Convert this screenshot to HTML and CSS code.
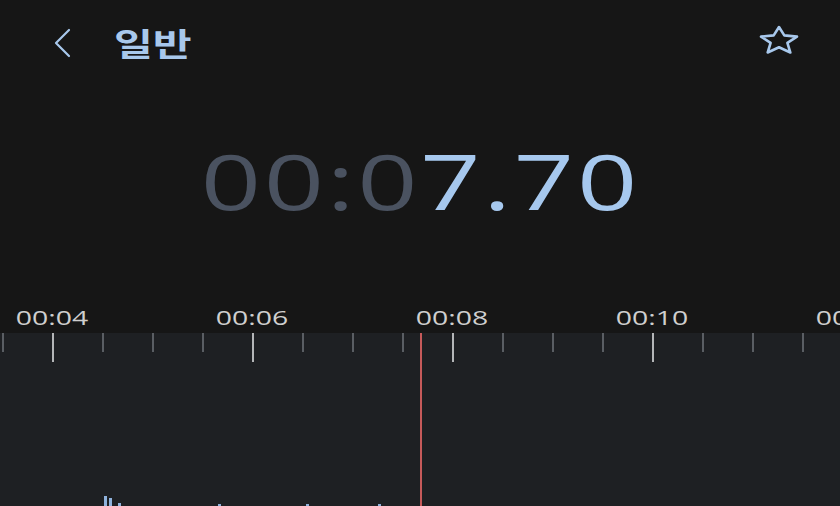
FILE: index.html
```html
<!DOCTYPE html>
<html lang="ko">
<head>
    <meta charset="UTF-8">
    <meta name="viewport" content="width=device-width, initial-scale=1.0">
    <title>녹음</title>
    <link rel="stylesheet" href="styles.css">
</head>
<body>
    <div class="screen">
        <!-- 상단 바 -->
        <header class="top-bar">
            <button class="icon-btn back">
                <svg width="22" height="30" viewBox="0 0 22 30"><path d="M19 2 L6 15 L19 28" fill="none" stroke="#a8c8ec" stroke-width="2.2" stroke-linecap="round" stroke-linejoin="round"/></svg>
            </button>
            <h1 class="title">일반</h1>
            <button class="icon-btn star">
                <svg width="42" height="32" viewBox="0 0 42 32"><path d="M21 2 L26.3 10.4 L39 11.6 L29.4 17.9 L32.3 27.5 L21 22.3 L9.7 27.5 L12.6 17.9 L3 11.6 L15.7 10.4 Z" fill="none" stroke="#a8c8ec" stroke-width="2.6" stroke-linejoin="round"/></svg>
            </button>
        </header>

        <!-- 경과 시간 -->
        <div class="timer"><span class="digits"><span class="dim">00:0</span><span class="lit">7.70</span></span></div>

        <!-- 타임라인 -->
        <div class="ruler-labels">
            <span style="left: 52px">00:04</span>
            <span style="left: 252px">00:06</span>
            <span style="left: 452px">00:08</span>
            <span style="left: 652px">00:10</span>
            <span style="left: 852px">00:12</span>
        </div>
        <div class="track">
            <div class="ticks" id="ticks"></div>
            <div class="playhead"></div>
            <div class="wave">
                <i style="left: 104px; height: 10px"></i>
                <i style="left: 109px; height: 8px"></i>
                <i style="left: 118px; height: 3px"></i>
                <i style="left: 218px; height: 2px"></i>
                <i style="left: 306px; height: 2px"></i>
                <i style="left: 378px; height: 2px"></i>
            </div>
        </div>
    </div>

    <script>
        const ticks = document.getElementById("ticks");
        for (let x = 2; x < 840; x += 50) {
            const t = document.createElement("i");
            t.className = (x - 52) % 200 === 0 ? "major" : "minor";
            t.style.left = x + "px";
            ticks.appendChild(t);
        }
    </script>
</body>
</html>
```

FILE: styles.css
```css
/* Base */
body {
    margin: 0;
    background-color: #161616;
    font-family: 'Noto Sans', 'Noto Sans CJK KR', sans-serif;
    overflow: hidden;
}

.screen {
    width: 840px;
    height: 506px;
    display: flex;
    flex-direction: column;
    overflow: hidden;
}

/* Top bar */
.top-bar {
    height: 84px;
    display: flex;
    align-items: center;
    padding: 0 40px 0 50px;
}

.icon-btn {
    background: none;
    border: none;
    padding: 0;
    display: flex;
    cursor: pointer;
}
.back { margin-top: 1px; }
.star { margin-top: -2px; }

.title {
    margin: 0 0 0 42px;
    flex: 1;
    font-family: 'Noto Sans CJK KR', sans-serif;
    font-size: 32px;
    font-weight: 700;
    color: #a8c8ec;
    transform: scaleX(1.32);
    transform-origin: left center;
}

/* Timer */
.timer {
    height: 205px;
    display: flex;
    justify-content: center;
    align-items: center;
    margin-top: -6px;
}
.digits {
    font-family: 'Open Sans', sans-serif;
    font-size: 77px;
    font-weight: 400;
    letter-spacing: 2px;
    line-height: 1;
    transform: scaleX(1.37);
}
.dim { color: #4a5260; }
.lit { color: #a6c8ee; }

/* Ruler */
.ruler-labels {
    position: relative;
    height: 50px;
}
.ruler-labels span {
    position: absolute;
    top: 23px;
    transform: translateX(-50%) scaleX(1.42);
    font-family: 'Open Sans', sans-serif;
    font-size: 20px;
    color: #cfcfcf;
    line-height: 1.2;
}

.track {
    position: relative;
    flex: 1;
    background-color: #1e2023;
}

.ticks i {
    position: absolute;
    top: 0;
    width: 2px;
}
.ticks .minor {
    height: 19px;
    background-color: #5a5e63;
}
.ticks .major {
    height: 29px;
    background-color: #b4b6b8;
}

.playhead {
    position: absolute;
    left: 420px;
    top: 0;
    bottom: 0;
    width: 2px;
    background-color: #c65a5a;
}

.wave i {
    position: absolute;
    bottom: 0;
    width: 3px;
    background-color: #8fb2dc;
}
```
